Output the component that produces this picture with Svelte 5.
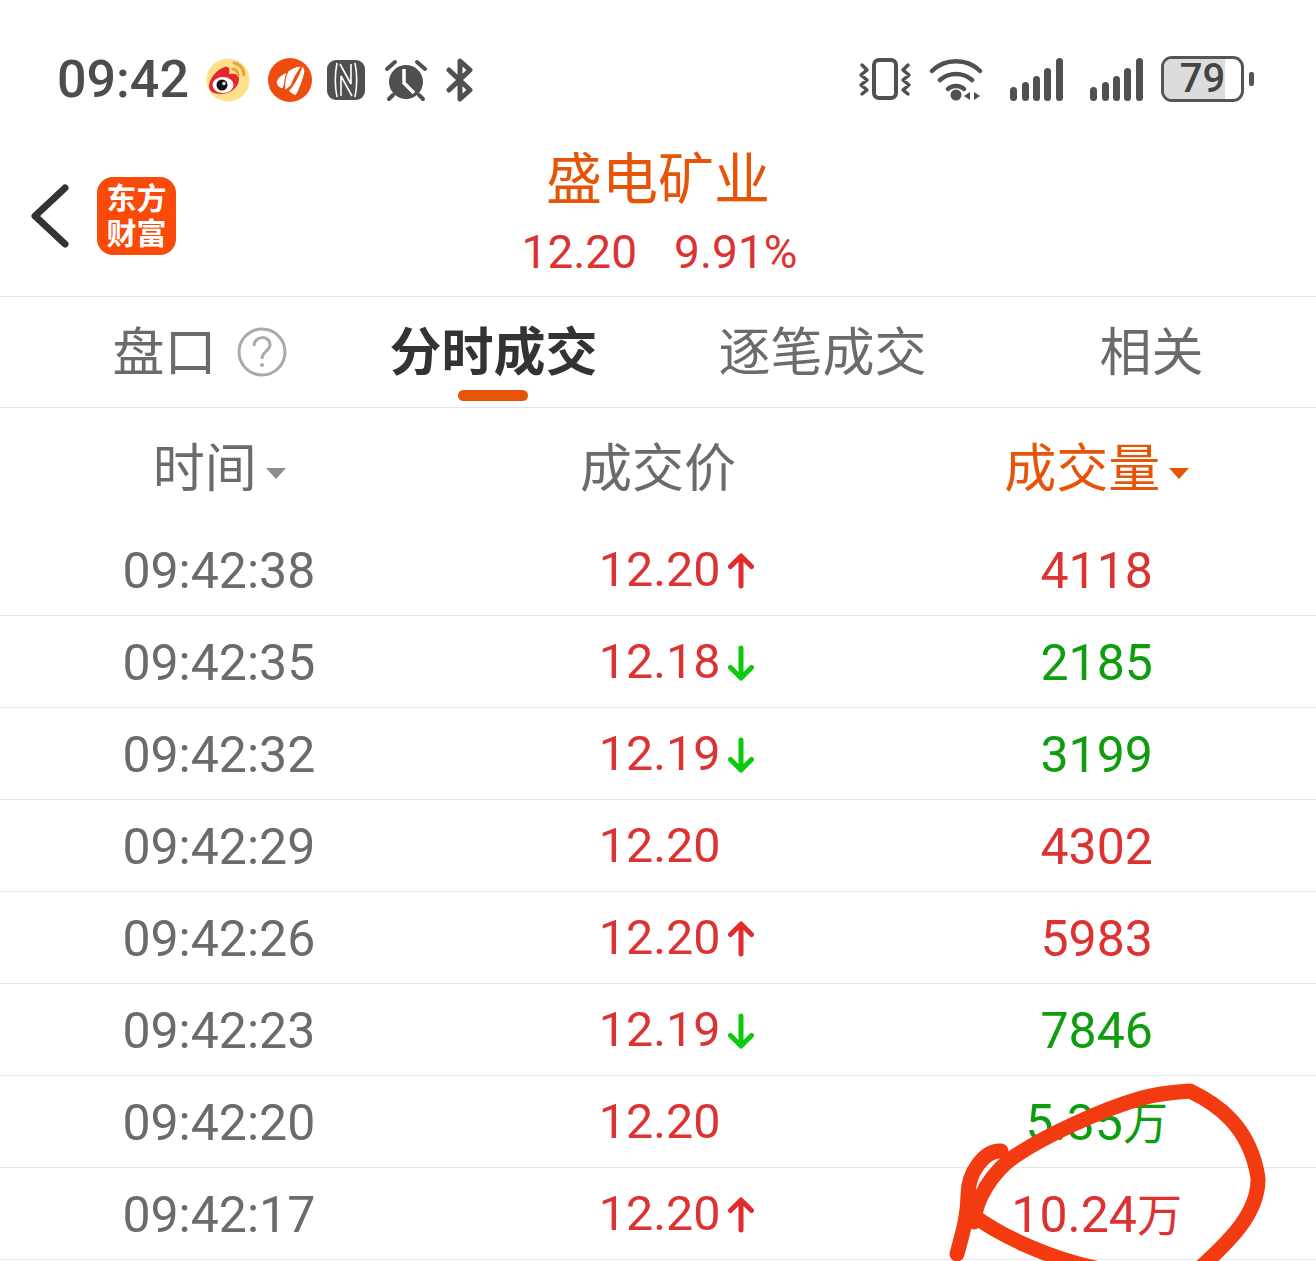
<script>
	const rows = [
		{ time: '09:42:38', price: '12.20', dir: 'up', vol: '4118', side: 'red' },
		{ time: '09:42:35', price: '12.18', dir: 'down', vol: '2185', side: 'green' },
		{ time: '09:42:32', price: '12.19', dir: 'down', vol: '3199', side: 'green' },
		{ time: '09:42:29', price: '12.20', dir: '', vol: '4302', side: 'red' },
		{ time: '09:42:26', price: '12.20', dir: 'up', vol: '5983', side: 'red' },
		{ time: '09:42:23', price: '12.19', dir: 'down', vol: '7846', side: 'green' },
		{ time: '09:42:20', price: '12.20', dir: '', vol: '5.35', unit: '万', side: 'green' },
		{ time: '09:42:17', price: '12.20', dir: 'up', vol: '10.24', unit: '万', side: 'red' }
	];
	const tabs = ['盘口', '分时成交', '逐笔成交', '相关'];
</script>

<main>
	<div class="status">
		<span class="clock">09:42</span>
		<svg class="ic" width="44" height="44" viewBox="0 0 44 44" style="margin-left:17px">
			<circle cx="22" cy="22" r="21.500" fill="#fde08a" />
			<path d="M3 28c0-7 8-17 16-19 5-1 5 4 4 7 5-1 10 0 10 5 0 9-10 15-18 15S3 33 3 28z" fill="#e5262a" />
			<ellipse cx="17" cy="27" rx="10.500" ry="8" fill="#fff" />
			<circle cx="16" cy="27" r="5.500" fill="#111" />
			<circle cx="18" cy="25.500" r="1.700" fill="#fff" />
			<path d="M28 5c6 1 10 6 10 12M27 11c3 0 5 3 5 6" fill="none" stroke="#eda13a" stroke-width="3" stroke-linecap="round" />
		</svg>
		<svg class="ic" width="44" height="44" viewBox="0 0 44 44" style="margin-left:18px">
			<circle cx="22" cy="22" r="22" fill="#ee4d10" />
			<g fill="#fff" stroke="#ee4d10" stroke-width="1.200">
				<path d="M8 24c1-4 6-9 13-10-2 5-4 11-6 17-4-1-7-3-7-7z" />
				<path d="M20 13c4-3 9-5 14-5-4 5-8 12-11 20l-6 5c-1-7 0-14 3-20z" />
				<path d="M34 8c2 1 3 3 3 6-2 9-5 17-9 24-3-1-6-3-8-5 6-6 11-16 14-25z" />
			</g>
		</svg>
		<svg class="ic" width="40" height="42" viewBox="0 0 40 42" style="margin-left:14px">
			<rect width="38" height="40" x="1" y="1" rx="9" fill="#505050" />
			<path d="M11 4C9 14 9 28 11 38M29 4C31 14 31 28 29 38" fill="none" stroke="#fff" stroke-width="1.600" />
			<path d="M15 37V17l11 20M14 5l11 20V5" fill="none" stroke="#fff" stroke-width="1.600" />
		</svg>
		<svg class="ic" width="44" height="44" viewBox="0 0 44 44" style="margin-left:18px">
			<path d="M3 11l8-7M41 11l-8-7M9 37l-4 4M35 37l4 4" stroke="#505050" stroke-width="4" stroke-linecap="round" />
			<circle cx="22" cy="24" r="17" fill="#505050" />
			<path d="M20 11v14l10 10" fill="none" stroke="#fff" stroke-width="3.500" />
		</svg>
		<svg class="ic" width="30" height="44" viewBox="0 0 30 44" style="margin-left:17px">
			<path d="M4 12l21 20-10 9V3l10 9L4 32" fill="none" stroke="#505050" stroke-width="5" stroke-linecap="round" stroke-linejoin="round" />
		</svg>
		<div class="right">
			<svg width="54" height="44" viewBox="0 0 54 44">
				<rect x="16" y="3" width="22" height="38" rx="5" fill="none" stroke="#505050" stroke-width="4" />
				<path d="M4 8l5 5-6 5 6 5-6 5 6 5-5 4M50 8l-5 5 6 5-6 5 6 5-6 5 5 4" fill="none" stroke="#505050" stroke-width="3.500" stroke-linecap="round" stroke-linejoin="round" />
			</svg>
			<svg width="54" height="44" viewBox="0 0 54 44" style="margin-left:17px">
				<path d="M3 14c13-13 35-13 48 0M11 23c9-8 23-8 32 0M19 32c4-4 12-4 16 0" fill="none" stroke="#505050" stroke-width="4.500" stroke-linecap="round" />
				<circle cx="27" cy="38" r="5.500" fill="#505050" />
				<path d="M41 35v8l-6-4zM45 35v8l6-4z" fill="#505050" />
			</svg>
			<svg width="54" height="44" viewBox="0 0 54 44" style="margin-left:26px">
				<rect x="1" y="30" width="7" height="14" rx="3.500" fill="#505050" />
				<rect x="13" y="25" width="7" height="19" rx="3.500" fill="#505050" />
				<rect x="24" y="19" width="7" height="25" rx="3.500" fill="#505050" />
				<rect x="35" y="11" width="7" height="33" rx="3.500" fill="#505050" />
				<rect x="47" y="1" width="7" height="43" rx="3.500" fill="#505050" />
			</svg>
			<svg width="54" height="44" viewBox="0 0 54 44" style="margin-left:26px">
				<rect x="1" y="30" width="7" height="14" rx="3.500" fill="#505050" />
				<rect x="13" y="25" width="7" height="19" rx="3.500" fill="#505050" />
				<rect x="24" y="19" width="7" height="25" rx="3.500" fill="#505050" />
				<rect x="35" y="11" width="7" height="33" rx="3.500" fill="#505050" />
				<rect x="47" y="1" width="7" height="43" rx="3.500" fill="#505050" />
			</svg>
			<div class="battery">
				<div class="cell">
					<div class="level"></div>
					<span>79</span>
				</div>
				<div class="cap"></div>
			</div>
		</div>
	</div>

	<header>
		<div class="brand">
			<svg width="40" height="64" viewBox="0 0 40 64">
				<path d="M35 4L5 32l30 28" fill="none" stroke="#333" stroke-width="7" stroke-linecap="round" stroke-linejoin="round" />
			</svg>
			<div class="logo">东方<br />财富</div>
		</div>
		<div class="title">
			<div class="name">盛电矿业</div>
			<div class="quote"><span>12.20</span><span>9.91%</span></div>
		</div>
	</header>

	<nav>
		{#each tabs as tab, i}
			<div class="tab" class:active={i === 1}>
				{tab}
				{#if i === 0}
					<svg class="help" width="50" height="50" viewBox="0 0 50 50">
						<circle cx="25" cy="25" r="23" fill="none" stroke="#aaa" stroke-width="3" />
						<path d="M17 19c0-11 16-11 16-1 0 6-8 6-8 14" fill="none" stroke="#aaa" stroke-width="3" />
						<circle cx="25" cy="38" r="2" fill="#aaa" />
					</svg>
				{/if}
				{#if i === 1}<i class="bar"></i>{/if}
			</div>
		{/each}
	</nav>

	<div class="head">
		<div>时间<i class="tri"></i></div>
		<div>成交价</div>
		<div class="sorted">成交量<i class="tri"></i></div>
	</div>

	{#each rows as r}
		<div class="row">
			<div class="time">{r.time}</div>
			<div class="price">
				{r.price}
				{#if r.dir === 'up'}
					<svg width="26" height="36" viewBox="0 0 26 36">
						<path d="M13 33V3M2.500 13.500L13 3l10.500 10.500" fill="none" stroke="#e12c2c" stroke-width="5" stroke-linecap="round" stroke-linejoin="round" />
					</svg>
				{:else if r.dir === 'down'}
					<svg width="26" height="36" viewBox="0 0 26 36">
						<path d="M13 3v30M2.500 22.500L13 33l10.500-10.500" fill="none" stroke="#0ccb0c" stroke-width="5" stroke-linecap="round" stroke-linejoin="round" />
					</svg>
				{/if}
			</div>
			<div class="vol {r.side}">{r.vol}{#if r.unit}<span class="unit">{r.unit}</span>{/if}</div>
		</div>
	{/each}

	<!-- hand drawn circle on top of the screenshot -->
	<svg class="scribble" width="1316" height="1261" viewBox="0 0 1316 1261">
		<g fill="none" stroke="#f33b12" stroke-width="15" stroke-linecap="round" stroke-linejoin="round">
			<path d="M957 1254C963 1232 968 1215 968 1195C968 1172 985 1150 1001 1151" />
			<path d="M974 1222C975 1200 992 1172 1015 1156C1045 1136 1100 1110 1142 1098C1160 1093 1175 1092 1190 1091C1215 1103 1250 1125 1258 1178C1259 1215 1225 1245 1200 1268" />
			<path d="M974 1216C1000 1235 1050 1260 1105 1270" />
		</g>
	</svg>
</main>

<style>
	:global(body) {
		background: #fff;
	}

	main {
		position: relative;
		overflow: hidden;
		width: 1316px;
		min-height: 1261px;
		font-family: Roboto, "Noto Sans CJK SC", sans-serif;
		color: #666;
	}

	.status {
		display: flex;
		align-items: center;
		height: 140px;
		padding: 20px 62px 0 58px;
		box-sizing: border-box;
	}

	.clock {
		font-size: 52px;
		font-weight: 500;
		color: #4d4d4d;
		line-height: 1;
		margin-left: -1px;
	}

	.ic {
		flex: none;
	}

	.right {
		display: flex;
		align-items: center;
		margin-left: auto;
		margin-top: -3px;
	}

	.battery {
		display: flex;
		align-items: center;
		margin-left: 18px;
	}

	.cell {
		position: relative;
		width: 77px;
		height: 40px;
		border: 3px solid #555;
		border-radius: 11px;
		overflow: hidden;
		display: flex;
		align-items: center;
		justify-content: center;
		font-size: 40px;
		font-weight: 500;
		color: #444;
		line-height: 1;
	}

	.level {
		position: absolute;
		left: 0;
		top: 0;
		bottom: 0;
		width: 79%;
		background: #dcdcdc;
	}

	.cell span {
		position: relative;
	}

	.cap {
		width: 5px;
		height: 14px;
		margin-left: 5px;
		background: #555;
		border-radius: 2px;
	}

	header {
		display: grid;
		grid-template-columns: 1fr auto 1fr;
		height: 156px;
		border-bottom: 1px solid #e5e5e5;
	}

	.brand {
		display: flex;
		align-items: center;
		padding-left: 30px;
		margin-top: -4px;
	}

	.logo {
		width: 79px;
		height: 78px;
		margin-left: 27px;
		border-radius: 16px;
		background: #f94a0a;
		color: #fff;
		font-size: 30px;
		font-weight: 700;
		line-height: 35px;
		text-align: center;
		padding-top: 4px;
		box-sizing: border-box;
	}

	.title {
		text-align: center;
	}

	.name {
		font-size: 56px;
		line-height: 70px;
		margin-top: 5px;
		color: #e65408;
	}

	.quote {
		display: flex;
		gap: 37px;
		justify-content: center;
		font-size: 46px;
		line-height: 60px;
		margin-top: 7px;
		margin-left: 3px;
		color: #dc3232;
	}

	nav {
		display: grid;
		grid-template-columns: repeat(4, 1fr);
		height: 110px;
		border-bottom: 1px solid #e5e5e5;
		font-size: 52px;
	}

	.tab {
		position: relative;
		text-align: center;
		line-height: 113px;
		color: #6b6b6b;
	}

	.tab.active {
		color: #333;
		font-weight: 700;
	}

	.help {
		position: absolute;
		left: 237px;
		top: 30px;
	}

	.bar {
		position: absolute;
		left: 129px;
		top: 93px;
		width: 70px;
		height: 11px;
		border-radius: 6px;
		background: #e65408;
	}

	.head {
		display: grid;
		grid-template-columns: repeat(3, 1fr);
		height: 116px;
		align-items: center;
		text-align: center;
		font-size: 52px;
		line-height: 1;
		color: #6b6b6b;
		padding-top: 8px;
		box-sizing: border-box;
	}

	.tri {
		display: inline-block;
		margin-left: 9px;
		vertical-align: middle;
		border-style: solid;
		border-width: 11px 10px 0;
		border-color: #8c8c92 transparent transparent;
	}

	.sorted {
		color: #e65408;
	}

	.sorted .tri {
		border-top-color: #e65408;
	}

	.row {
		display: grid;
		grid-template-columns: repeat(3, 1fr);
		height: 92px;
		box-sizing: border-box;
		border-bottom: 1px solid #e5e5e5;
		align-items: center;
		font-size: 50px;
		line-height: 1;
		text-align: center;
		padding-top: 2px;
	}

	.time {
		color: #6b6b6b;
		margin-left: -1px;
	}

	.price {
		display: flex;
		align-items: center;
		gap: 8px;
		padding-left: 160px;
		font-size: 48.500px;
		color: #dc3232;
	}

	.unit {
		font-size: 45px;
	}

	.red {
		color: #dc3232;
	}

	.green {
		color: #0f9d0f;
	}

	.scribble {
		position: absolute;
		left: 0;
		top: 0;
		pointer-events: none;
	}
</style>
